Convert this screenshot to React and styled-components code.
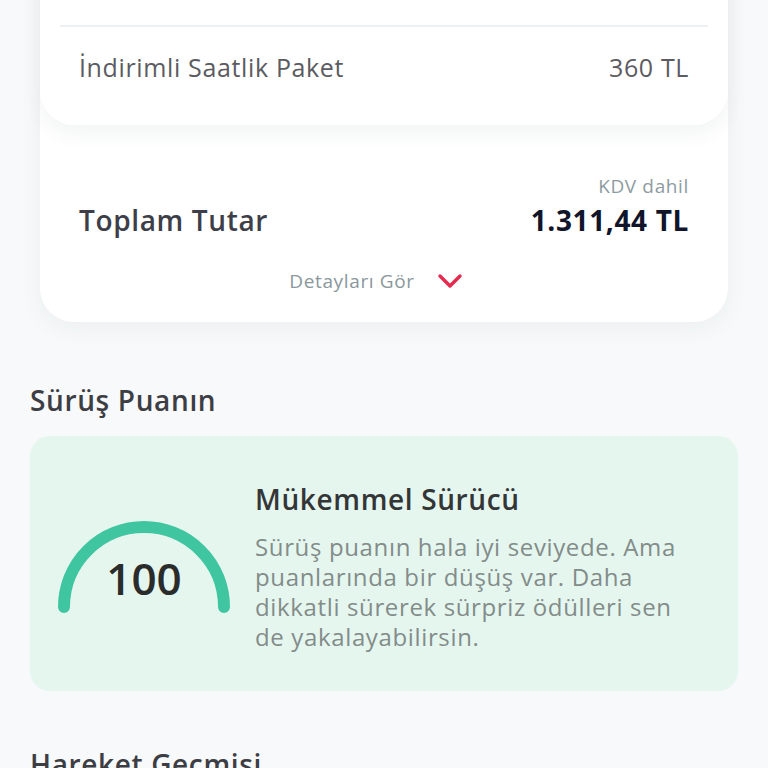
import React from 'react';
import styled, { createGlobalStyle } from 'styled-components';

const GlobalStyle = createGlobalStyle`
	html, body {
		margin: 0;
		padding: 0;
		background: #f7f9fa;
		font-family: "Open Sans", Lato, sans-serif;
		letter-spacing: 0.04em;
		overflow: hidden;
	}
`;

const Page = styled.div`
	width: 768px;
	height: 768px;
	overflow: hidden;
	box-sizing: border-box;
	padding: 0 30px;
	background: #f7f9fa;
`;

const Shift = styled.div`
	margin-top: -53px;
`;

const SummaryCard = styled.div`
	margin: 0 10px;
	background: #fff;
	border-radius: 0 0 34px 34px;
	box-shadow: 0 6px 24px rgba(30, 50, 60, 0.05);
`;

const DetailsPanel = styled.div`
	background: #fff;
	border-radius: 0 0 34px 34px;
	padding: 0 20px 18px;
	box-shadow: 0 10px 18px rgba(30, 50, 60, 0.05);
`;

const LineRow = styled.div`
	display: flex;
	justify-content: space-between;
	align-items: center;
	padding: 26px 19px;
	font-size: 25px;
	line-height: 28px;
	color: #5b5b61;
	border-top: ${(p) => (p.$divider ? '2px solid #eef1f3' : 'none')};
	margin-top: ${(p) => (p.$divider ? '-2px' : '0')};
`;

const Totals = styled.div`
	padding: 50px 39px 29px;
	display: flex;
	flex-direction: column;
`;

const TotalRow = styled.div`
	display: flex;
	justify-content: space-between;
	align-items: flex-end;
`;

const TotalLabel = styled.div`
	font-size: 28px;
	line-height: 34px;
	font-weight: 600;
	color: #3d3e48;
`;

const AmountBlock = styled.div`
	display: flex;
	flex-direction: column;
	align-items: flex-end;
	gap: 6px;
`;

const TaxNote = styled.div`
	font-size: 19px;
	line-height: 22px;
	color: #8d9ba1;
`;

const Amount = styled.div`
	font-size: 28px;
	line-height: 34px;
	font-weight: 700;
	color: #10152a;
`;

const DetailsToggle = styled.button`
	align-self: center;
	margin-top: 32px;
	margin-right: 16px;
	display: flex;
	align-items: center;
	gap: 22px;
	background: none;
	border: none;
	padding: 0;
	font-family: inherit;
	letter-spacing: inherit;
	font-size: 19px;
	line-height: 24px;
	color: #8a979c;
	cursor: pointer;
`;

const SectionTitle = styled.h2`
	margin: ${(p) => p.$top}px 0 20px;
	font-size: 28px;
	line-height: 32px;
	font-weight: 600;
	color: #3d3e44;
`;

const ScoreCard = styled.div`
	background: #e5f6ef;
	border-radius: 20px;
	padding: 47px 28px 39px;
	display: flex;
	align-items: center;
	gap: 25px;
`;

const Gauge = styled.div`
	position: relative;
	width: 172px;
	height: 94px;
	flex-shrink: 0;
`;

const GaugeValue = styled.div`
	position: absolute;
	left: 0;
	right: 0;
	top: 33px;
	text-align: center;
	font-size: 44px;
	line-height: 48px;
	font-weight: 600;
	letter-spacing: 0;
	color: #2a2b2b;
`;

const ScoreText = styled.div`
	display: flex;
	flex-direction: column;
	gap: 17px;
	max-width: 450px;
`;

const ScoreTitle = styled.div`
	font-size: 28px;
	line-height: 32px;
	font-weight: 600;
	color: #333536;
`;

const ScoreDesc = styled.div`
	font-size: 24px;
	line-height: 30px;
	color: #838c89;
`;

const Chevron = () => (
	<svg width="26" height="16" viewBox="0 0 26 16" fill="none">
		<path d="M3 3 L13 13 L23 3" stroke="#e8294f" strokeWidth="3.4" strokeLinecap="round" strokeLinejoin="round" />
	</svg>
);

const GaugeArc = () => (
	<svg width="172" height="94" viewBox="0 0 172 94">
		<path d="M6 86 A80 80 0 0 1 166 86" fill="none" stroke="#3fc6a0" strokeWidth="12" strokeLinecap="round" />
	</svg>
);

const App = () => {
	return (
		<Page>
			<GlobalStyle />
			<Shift>
				<SummaryCard>
					<DetailsPanel>
						<LineRow>
							<span>Kiralama Ücreti</span>
							<span>951,44 TL</span>
						</LineRow>
						<LineRow $divider>
							<span>İndirimli Saatlik Paket</span>
							<span>360 TL</span>
						</LineRow>
					</DetailsPanel>
					<Totals>
						<TotalRow>
							<TotalLabel>Toplam Tutar</TotalLabel>
							<AmountBlock>
								<TaxNote>KDV dahil</TaxNote>
								<Amount>1.311,44 TL</Amount>
							</AmountBlock>
						</TotalRow>
						<DetailsToggle>
							Detayları Gör
							<Chevron />
						</DetailsToggle>
					</Totals>
				</SummaryCard>
			</Shift>

			<SectionTitle $top={62}>Sürüş Puanın</SectionTitle>
			<ScoreCard>
				<Gauge>
					<GaugeArc />
					<GaugeValue>100</GaugeValue>
				</Gauge>
				<ScoreText>
					<ScoreTitle>Mükemmel Sürücü</ScoreTitle>
					<ScoreDesc>
						Sürüş puanın hala iyi seviyede. Ama puanlarında bir düşüş var. Daha dikkatli sürerek sürpriz ödülleri sen de yakalayabilirsin.
					</ScoreDesc>
				</ScoreText>
			</ScoreCard>

			<SectionTitle $top={57}>Hareket Geçmişi</SectionTitle>
		</Page>
	);
};

export default App;
